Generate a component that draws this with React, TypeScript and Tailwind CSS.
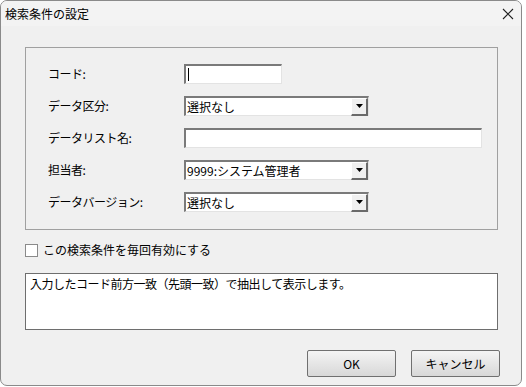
import React from "react";

const font = { fontFamily: '"Noto Sans CJK JP", "Noto Sans", sans-serif' };

function Sunken({ w, children }: { w: string; children?: React.ReactNode }) {
  return (
    <div
      className={`${w} h-[20px] bg-white border-t-2 border-l-2 border-t-[#7a7a7a] border-l-[#7a7a7a] border-b border-r border-b-[#e3e3e3] border-r-[#e3e3e3] flex items-center`}
    >
      {children}
    </div>
  );
}

function Select({ value }: { value: string }) {
  return (
    <Sunken w="w-[185px]">
      <div className="flex-1 pl-[1px] text-[12px] leading-[17px] text-black whitespace-nowrap">{value}</div>
      <div className="w-[17px] h-[18px] bg-[#f0f0f0] border-t border-l border-t-white border-l-white border-b-2 border-r-2 border-b-[#6a6a6a] border-r-[#6a6a6a] flex items-center justify-center">
        <svg width="7" height="4" viewBox="0 0 7 4">
          <path d="M0 0H7L3.5 4Z" fill="#000" />
        </svg>
      </div>
    </Sunken>
  );
}

function Row({ label, children }: { label: string; children: React.ReactNode }) {
  return (
    <div className="flex items-center h-[20px]">
      <div className="w-[136px] text-[12px] leading-[16px] text-black tracking-[-0.5px]">{label}</div>
      {children}
    </div>
  );
}

export default function App() {
  return (
    <div className="w-[526px] h-[387px] bg-white" style={font}>
      <div className="w-[522px] h-[386px] rounded-[7px] border border-[#8a8a8a] bg-[#f0f0f0] overflow-hidden flex flex-col">
        <div className="h-[25px] bg-[#f3f3f3] flex items-center justify-between pl-[4px] pr-[7px]">
          <span className="text-[12px] text-black leading-[16px]">検索条件の設定</span>
          <svg width="12" height="12" viewBox="0 0 12 12">
            <path d="M1 1L11 11M11 1L1 11" stroke="#222" strokeWidth="1.1" />
          </svg>
        </div>
        <div className="flex flex-col pl-[24px]">
          <div className="mt-[21px] w-[473px] h-[183px] border border-[#a0a0a0] pl-[22px] pt-[16px] flex flex-col gap-[12px]">
            <Row label="コード:">
              <Sunken w="w-[98px]">
                <div className="ml-[2px] w-[1px] h-[13px] bg-black" />
              </Sunken>
            </Row>
            <Row label="データ区分:">
              <Select value="選択なし" />
            </Row>
            <Row label="データリスト名:">
              <Sunken w="w-[298px]" />
            </Row>
            <Row label="担当者:">
              <Select value="9999:システム管理者" />
            </Row>
            <Row label="データバージョン:">
              <Select value="選択なし" />
            </Row>
          </div>
          <div className="mt-[13px] flex items-center h-[14px]">
            <div className="w-[13px] h-[13px] bg-white border border-[#8a8a8a]" />
            <span className="ml-[5px] text-[12px] leading-[16px] text-black">この検索条件を毎回有効にする</span>
          </div>
          <div className="mt-[16px] w-[473px] h-[57px] bg-white border border-[#6e6e6e] pl-[4px] pt-[2px] text-[12px] leading-[16px] text-black tracking-[-0.5px]">
            入力したコード前方一致（先頭一致）で抽出して表示します。
          </div>
          <div className="mt-[20px] flex justify-end gap-[15px] pr-[21px]">
            <button className="w-[89px] h-[27px] rounded-[2px] border border-[#707070] bg-gradient-to-b from-[#f4f4f4] to-[#d8d8d8] text-[12px] text-black">
              OK
            </button>
            <button className="w-[89px] h-[27px] rounded-[2px] border border-[#707070] bg-gradient-to-b from-[#f4f4f4] to-[#d8d8d8] text-[12px] text-black">
              キャンセル
            </button>
          </div>
        </div>
      </div>
    </div>
  );
}
